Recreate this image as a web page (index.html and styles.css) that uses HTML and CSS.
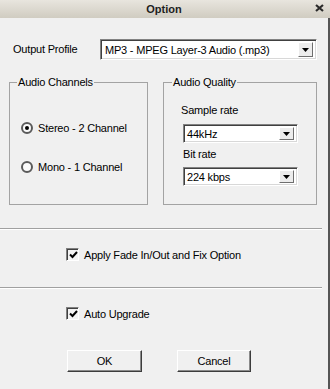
FILE: index.html
```html
<!DOCTYPE html>
<html lang="en">
<head>
  <meta charset="UTF-8">
  <title>Option</title>
  <link rel="stylesheet" href="styles.css">
</head>
<body>
  <div class="window">
    <div class="titlebar">
      <span class="title">Option</span>
      <svg class="close" width="9" height="8" viewBox="0 0 9 8">
        <path d="M1 1 L8 7 M8 1 L1 7" stroke="#2b2b2b" stroke-width="2.2" fill="none"/>
      </svg>
    </div>

    <div class="client">
      <div class="profile-row">
        <span class="profile-label">Output Profile</span>
        <div class="combo combo-wide">
          <span class="combo-text">MP3 - MPEG Layer-3 Audio (.mp3)</span>
          <span class="combo-btn"><svg width="7" height="4" viewBox="0 0 7 4"><path d="M0 0 H7 L3.5 4 Z" fill="#000"/></svg></span>
        </div>
      </div>

      <div class="groups">
        <div class="group group-channels">
          <span class="legend">Audio Channels</span>
          <div class="radio-row"><span class="radio checked"></span>Stereo - 2 Channel</div>
          <div class="radio-row radio-second"><span class="radio"></span>Mono - 1 Channel</div>
        </div>

        <div class="group group-quality">
          <span class="legend">Audio Quality</span>
          <div class="field-label first">Sample rate</div>
          <div class="combo combo-small">
            <span class="combo-text">44kHz</span>
            <span class="combo-btn"><svg width="7" height="4" viewBox="0 0 7 4"><path d="M0 0 H7 L3.5 4 Z" fill="#000"/></svg></span>
          </div>
          <div class="field-label">Bit rate</div>
          <div class="combo combo-small">
            <span class="combo-text">224 kbps</span>
            <span class="combo-btn"><svg width="7" height="4" viewBox="0 0 7 4"><path d="M0 0 H7 L3.5 4 Z" fill="#000"/></svg></span>
          </div>
        </div>
      </div>

      <div class="sep sep-first"></div>

      <div class="check-row check-fade">
        <span class="checkbox"><svg width="9" height="8" viewBox="0 0 9 8"><path d="M1 3.5 L3.5 6 L8 1" stroke="#000" stroke-width="2" fill="none"/></svg></span>
        Apply Fade In/Out and Fix Option
      </div>

      <div class="sep sep-second"></div>

      <div class="check-row check-upgrade">
        <span class="checkbox"><svg width="9" height="8" viewBox="0 0 9 8"><path d="M1 3.5 L3.5 6 L8 1" stroke="#000" stroke-width="2" fill="none"/></svg></span>
        Auto Upgrade
      </div>

      <div class="buttons">
        <button class="button button-ok">OK</button>
        <button class="button button-cancel">Cancel</button>
      </div>
    </div>
  </div>
</body>
</html>
```

FILE: styles.css
```css
body {
  margin: 0;
  padding: 0;
  font-family: "Liberation Sans", Arial, sans-serif;
  font-size: 11px;
  letter-spacing: -0.2px;
  color: #000;
  background-color: #f0f0f0;
}
.window {
  width: 330px;
  height: 389px;
  display: flex;
  flex-direction: column;
}
.titlebar {
  position: relative;
  height: 18px;
  flex: none;
  display: flex;
  align-items: center;
  justify-content: center;
  background: linear-gradient(to bottom, #e8e5de, #d0ccc1);
}
.title {
  font-weight: bold;
  font-size: 11px;
  letter-spacing: 0;
  color: #1e1e1e;
  margin-left: -2px;
}
.close {
  position: absolute;
  right: 6px;
  top: 4px;
}
.client {
  flex: 1;
  background-color: #f0f0f0;
  border-right: 2px solid #555;
}
.profile-row {
  display: flex;
  align-items: center;
  padding: 21px 0 0 13px;
}
.profile-label {
  width: 87px;
  margin-top: -2px;
}
.combo {
  box-sizing: border-box;
  display: flex;
  align-items: center;
  background-color: #fff;
  border: 1px solid;
  border-color: #828282 #fff #fff #828282;
  box-shadow: inset 1px 1px 0 #404040, inset -1px -1px 0 #d8d8d8;
  padding: 2px;
}
.combo-wide {
  width: 217px;
  height: 21px;
}
.combo-small {
  width: 115px;
  height: 19px;
}
.combo-text {
  flex: 1;
  padding-left: 2px;
  white-space: nowrap;
}
.combo-small .combo-text {
  padding-left: 1px;
}
.combo-btn {
  box-sizing: border-box;
  width: 15px;
  align-self: stretch;
  display: flex;
  align-items: center;
  justify-content: center;
  background-color: #ececec;
  border: 1px solid;
  border-color: #fff #6e6e6e #6e6e6e #fff;
  margin-right: 1px;
}
.groups {
  display: flex;
  gap: 15px;
  padding-left: 9px;
  margin-top: 22px;
}
.group {
  position: relative;
  box-sizing: border-box;
  height: 123px;
  border: 1px solid #a3a3a3;
}
.group-channels {
  width: 139px;
  padding: 38px 0 0 11px;
}
.group-quality {
  width: 154px;
  padding: 21px 0 0 19px;
}
.legend {
  position: absolute;
  top: -7px;
  left: 7px;
  padding: 0 1px;
  background-color: #f0f0f0;
}
.group-quality .legend {
  left: 8px;
}
.radio-row {
  display: flex;
  align-items: center;
  height: 14px;
}
.radio-second {
  margin-top: 25px;
}
.radio {
  box-sizing: border-box;
  width: 12px;
  height: 12px;
  border-radius: 50%;
  border: 2px solid #5a5a5a;
  background-color: #fafafa;
  margin-right: 5px;
  display: flex;
  align-items: center;
  justify-content: center;
}
.radio.checked::after {
  content: "";
  width: 4px;
  height: 4px;
  border-radius: 50%;
  background-color: #000;
}
.field-label {
  height: 13px;
  line-height: 13px;
  margin: 5px 0 6px 0;
}
.field-label.first {
  margin: 0 0 7px -2px;
}
.sep {
  width: 322px;
  height: 0;
  border-top: 1px solid #a0a0a0;
  border-bottom: 1px solid #fff;
}
.sep-first {
  margin-top: 23px;
}
.sep-second {
  margin-top: 26px;
}
.check-row {
  display: flex;
  align-items: center;
  height: 13px;
  padding-left: 66px;
  margin-top: 18px;
}
.checkbox {
  box-sizing: border-box;
  width: 13px;
  height: 13px;
  margin-right: 5px;
  border: 1px solid;
  border-color: #808080 #fff #fff #808080;
  box-shadow: inset 1px 1px 0 #404040;
  background-color: #f3f3f3;
  display: flex;
  align-items: center;
  justify-content: center;
  padding: 1px 0 0 1px;
}
.buttons {
  display: flex;
  gap: 35px;
  padding-left: 67px;
  margin-top: 30px;
}
.button {
  box-sizing: border-box;
  height: 22px;
  font-family: "Liberation Sans", Arial, sans-serif;
  font-size: 11px;
  letter-spacing: -0.2px;
  color: #000;
  background-color: #f0f0f0;
  border: 1px solid;
  border-color: #fff #3c3c3c #3c3c3c #fff;
  box-shadow: inset -1px -1px 0 #8a8a8a;
  padding: 0;
}
.button-ok {
  width: 75px;
}
.button-cancel {
  width: 74px;
}
```
